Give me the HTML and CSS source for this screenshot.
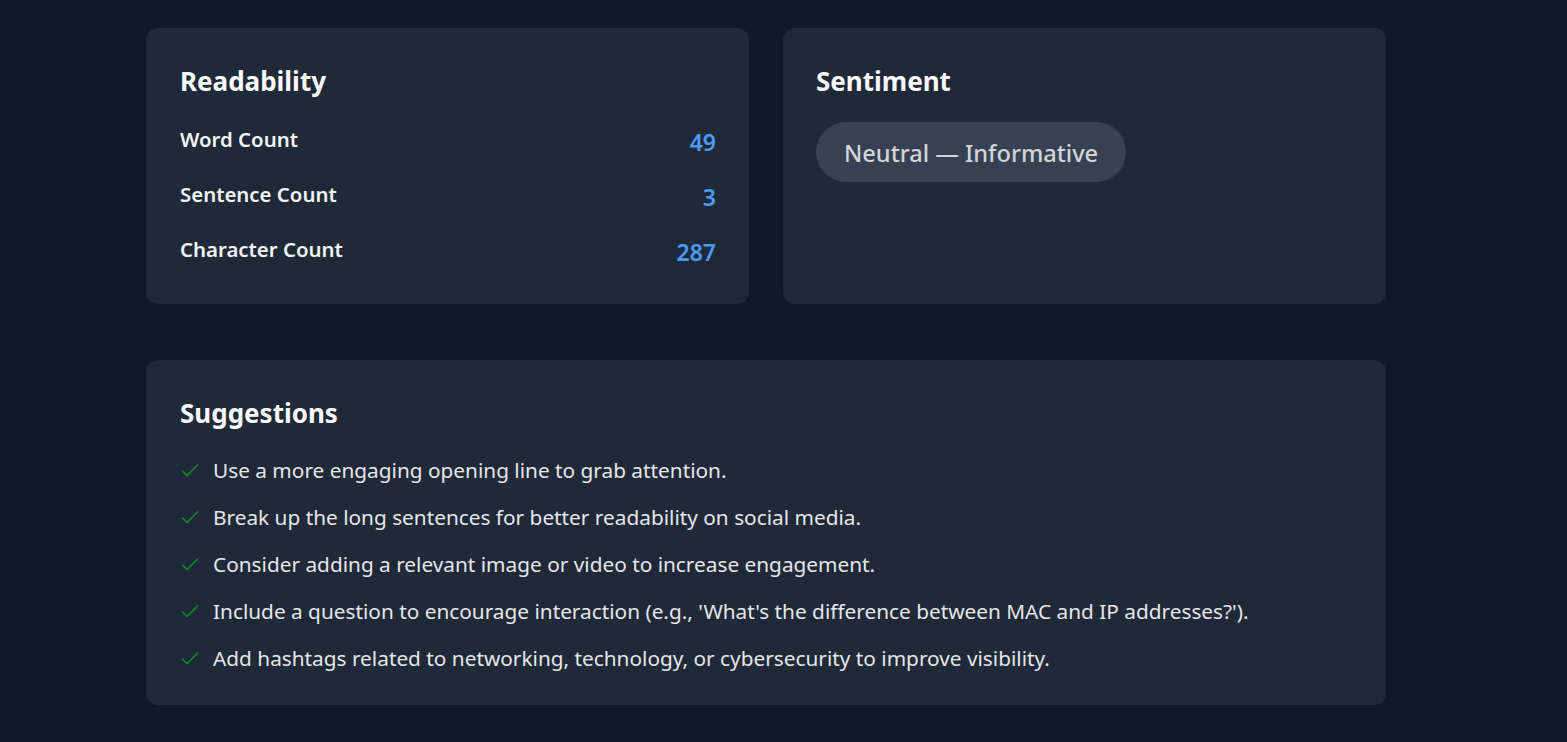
FILE: index.html
```html
<!DOCTYPE html>
<html lang="en">
<head>
<meta charset="utf-8">
<title>Analysis</title>
<link rel="stylesheet" href="styles.css">
</head>
<body>
<main class="page">
  <div class="top-grid">
    <section class="card">
      <h2 class="card-title">Readability</h2>
      <div class="stats">
        <div class="stat-row"><span class="stat-label">Word Count</span><span class="stat-value">49</span></div>
        <div class="stat-row"><span class="stat-label">Sentence Count</span><span class="stat-value">3</span></div>
        <div class="stat-row"><span class="stat-label">Character Count</span><span class="stat-value">287</span></div>
      </div>
    </section>
    <section class="card card-right">
      <h2 class="card-title">Sentiment</h2>
      <div class="pill-wrap"><span class="pill">Neutral — Informative</span></div>
    </section>
  </div>
  <section class="card suggestions">
    <h2 class="card-title">Suggestions</h2>
    <ul class="sugg-list">
      <li class="sugg-item"><svg class="check" viewBox="0 0 18 14" aria-hidden="true"><path d="M1 7.5 L6 12.5 L17 1.5"/></svg><span>Use a more engaging opening line to grab attention.</span></li>
      <li class="sugg-item"><svg class="check" viewBox="0 0 18 14" aria-hidden="true"><path d="M1 7.5 L6 12.5 L17 1.5"/></svg><span>Break up the long sentences for better readability on social media.</span></li>
      <li class="sugg-item"><svg class="check" viewBox="0 0 18 14" aria-hidden="true"><path d="M1 7.5 L6 12.5 L17 1.5"/></svg><span>Consider adding a relevant image or video to increase engagement.</span></li>
      <li class="sugg-item"><svg class="check" viewBox="0 0 18 14" aria-hidden="true"><path d="M1 7.5 L6 12.5 L17 1.5"/></svg><span>Include a question to encourage interaction (e.g., 'What's the difference between MAC and IP addresses?').</span></li>
      <li class="sugg-item"><svg class="check" viewBox="0 0 18 14" aria-hidden="true"><path d="M1 7.5 L6 12.5 L17 1.5"/></svg><span>Add hashtags related to networking, technology, or cybersecurity to improve visibility.</span></li>
    </ul>
  </section>
</main>
</body>
</html>
```

FILE: styles.css
```css
* { box-sizing: border-box; }

html, body {
  margin: 0;
  padding: 0;
  background: #111827;
  font-family: "Noto Sans", "Open Sans", sans-serif;
  color: #f3f4f6;
}

.page {
  width: 1240px;
  margin-left: 146px;
  padding-top: 28px;
}

.top-grid {
  display: grid;
  grid-template-columns: 603px 603px;
  column-gap: 34px;
}

.card {
  background: #1f2937;
  border-radius: 12px;
  padding: 36px 33px 30px 34px;
}

.card-right {
  padding-left: 33px;
}

.top-grid .card {
  height: 276px;
}

.card-title {
  margin: 0;
  font-size: 26px;
  line-height: 34px;
  font-weight: 700;
  color: #f9fafb;
}

.stats {
  display: flex;
  flex-direction: column;
  gap: 22px;
  margin-top: 26px;
}

.stat-row {
  display: flex;
  justify-content: space-between;
  align-items: center;
  height: 33px;
}

.stat-label {
  font-size: 20.4px;
  font-weight: 600;
  color: #f3f4f6;
  padding-bottom: 3px;
}

.stat-value {
  font-size: 23px;
  font-weight: 600;
  color: #4b9cf7;
  padding-top: 3px;
}

.pill-wrap {
  margin-top: 24px;
  display: flex;
}

.pill {
  display: inline-flex;
  align-items: center;
  height: 60px;
  padding: 0 28px;
  border-radius: 30px;
  background: #374151;
  color: #d1d5db;
  font-size: 23.6px;
  font-weight: 500;
  padding-top: 1px;
}

.suggestions {
  margin-top: 56px;
  padding-bottom: 30px;
}

.sugg-list {
  list-style: none;
  margin: 24px 0 0 0;
  padding: 0;
  display: flex;
  flex-direction: column;
  gap: 14px;
}

.sugg-item {
  display: flex;
  align-items: center;
  gap: 14px;
  font-size: 20.8px;
  line-height: 33px;
  color: #e5e7eb;
}

.check {
  width: 18px;
  height: 14px;
  flex: none;
  margin-left: 1px;
  margin-top: -2px;
}

.check path {
  fill: none;
  stroke: #128a26;
  stroke-width: 1.6;
}
```
